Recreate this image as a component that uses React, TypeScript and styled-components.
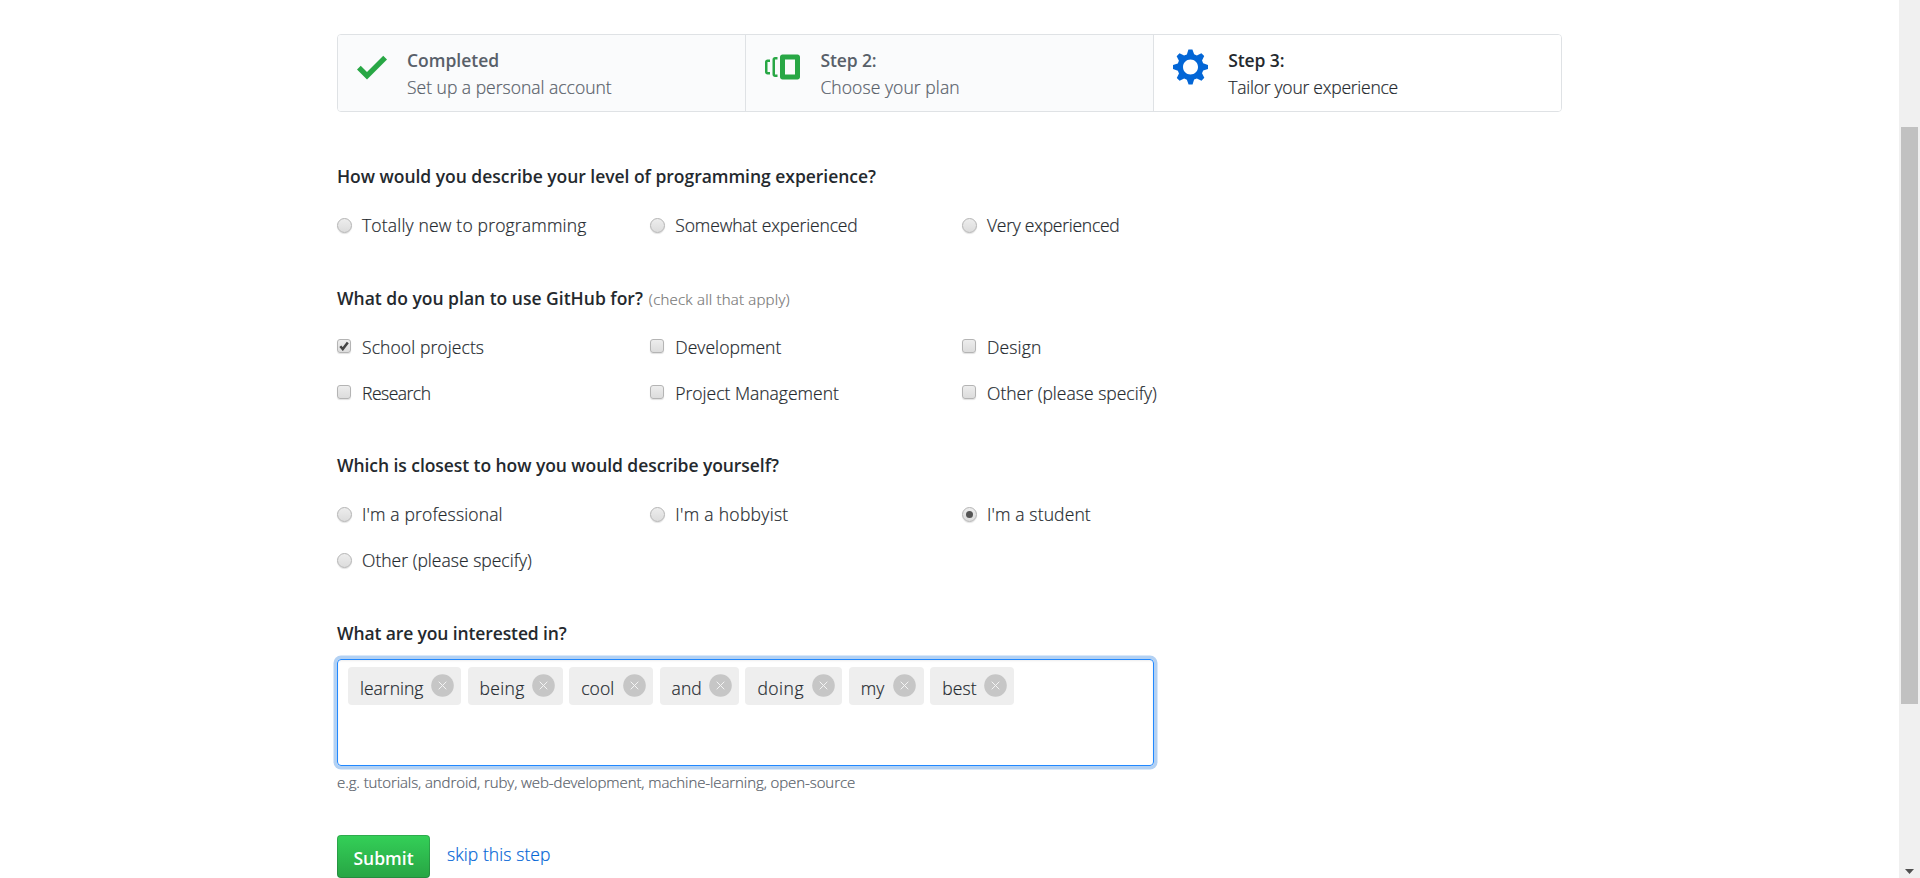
import React from "react";
import styled, { createGlobalStyle, css } from "styled-components";

const GlobalStyle = createGlobalStyle`
  *, *::before, *::after { box-sizing: border-box; }
  html, body { margin: 0; height: 878px; overflow: hidden; background: #fff; }
  body {
    color: #24292e;
    font: 300 17.5px/26px "Open Sans", "Noto Sans", sans-serif;
    -webkit-text-stroke-width: 0.2px;
  }
`;

const Window = styled.div`
  display: flex;
  width: 1920px;
  height: 878px;
  overflow: hidden;
`;

const Page = styled.main`
  flex: 1;
  display: flex;
  justify-content: center;
  padding-top: 34px;
`;

const Container = styled.div`
  width: 1225px;
`;

const Text = styled.span<{ $track?: number }>`
  white-space: nowrap;
  letter-spacing: ${(p) => p.$track ?? 0}px;
`;

const Steps = styled.ol`
  display: grid;
  grid-template-columns: 407.4px 407.9px 1fr;
  height: 78px;
  margin: 0 0 51px;
  padding: 0;
  list-style: none;
  border: 1px solid #dfe2e5;
  border-radius: 4px;
  overflow: hidden;
`;

const Step = styled.li<{ $current?: boolean }>`
  display: flex;
  gap: 20px;
  padding: 12px 19px;
  color: ${(p) => (p.$current ? "#24292e" : "#586069")};
  background: ${(p) => (p.$current ? "#fff" : "#fafbfc")};

  & + & {
    border-left: 1px solid #dfe2e5;
  }
`;

const StepIcon = styled.svg<{ $color: string }>`
  flex: none;
  height: 40px;
  fill: ${(p) => p.$color};
`;

const StepText = styled.div`
  display: flex;
  flex-direction: column;
`;

const StepTitle = styled(Text)`
  margin-bottom: 1px;
  font-weight: 600;
  -webkit-text-stroke-width: 0;
`;

const Group = styled.section`
  margin-bottom: 36.6px;
`;

const Question = styled.h4`
  margin: 0 0 13px;
  font-size: 17.5px;
  font-weight: 600;
  line-height: 26px;
  -webkit-text-stroke-width: 0;
`;

const Note = styled(Text)`
  margin-left: 6px;
  font-size: 15px;
  font-weight: 300;
  line-height: 1;
  color: #767676;
  -webkit-text-stroke-width: 0.2px;
`;

const Options = styled.div`
  display: grid;
  grid-template-columns: repeat(3, 312.5px);
  grid-auto-rows: 46px;
`;

const Option = styled.label`
  display: flex;
  align-items: center;

  &:nth-child(3n + 2) > :last-child {
    margin-left: 0.8px;
  }
`;

const control = css`
  flex: none;
  display: flex;
  align-items: center;
  justify-content: center;
  border: 1px solid #b4b4b4;
  background: linear-gradient(#ededed, #dcdcdc);
  box-shadow: 0 1px 1px rgba(0, 0, 0, 0.12);
`;

const Radio = styled.span<{ $checked?: boolean }>`
  ${control}
  width: 15px;
  height: 15px;
  margin-right: 10px;
  border-radius: 50%;

  &::after {
    content: "";
    width: 7px;
    height: 7px;
    border-radius: 50%;
    background: ${(p) => (p.$checked ? "#555" : "transparent")};
  }
`;

const Checkbox = styled.span`
  ${control}
  width: 14px;
  height: 14px;
  margin: -1px 11px 0 0;
  border-radius: 3px;
`;

const TagBox = styled.div`
  display: flex;
  align-items: flex-start;
  gap: 6.4px;
  width: 816.5px;
  height: 107px;
  padding: 7px 10px;
  border: 1px solid #2188ff;
  border-radius: 4px;
  box-shadow: inset 0 1px 2px rgba(27, 31, 35, 0.075), 0 0 0 3.5px rgba(3, 102, 214, 0.3);
`;

const Tag = styled.span<{ $width: number }>`
  display: flex;
  align-items: center;
  justify-content: space-between;
  width: ${(p) => p.$width}px;
  height: 38px;
  padding: 0 7.5px 0 12px;
  border-radius: 4px;
  background: #eee;
`;

const TagName = styled(Text)`
  padding-top: 4px;
`;

const Remove = styled.svg`
  flex: none;
  width: 23px;
  height: 23px;
`;

const Hint = styled.p`
  margin: 5px 0 0;
  font-size: 15px;
  line-height: 22px;
  color: #586069;
`;

const Actions = styled.div`
  display: flex;
  align-items: flex-start;
  gap: 17px;
  margin-top: 42px;
`;

const Submit = styled.button`
  width: 93px;
  height: 43px;
  padding: 3.5px 0 0;
  border: 1px solid rgba(27, 31, 35, 0.2);
  border-radius: 4px;
  background: #28a745 linear-gradient(-180deg, #34d058, #28a745 90%) -1px -1px / 110% 110%;
  color: #fff;
  font: 600 17.5px/26px "Open Sans", "Noto Sans", sans-serif;
  -webkit-text-stroke-width: 0;
`;

const SkipLink = styled.a`
  padding-top: 6.6px;
  color: #0366d6;
  text-decoration: none;
`;

const ScrollTrack = styled.div`
  display: flex;
  flex-direction: column;
  justify-content: space-between;
  align-items: center;
  width: 21px;
  padding: 127px 2px 4px;
  background: #f0f0f0;
`;

const ScrollThumb = styled.div`
  width: 17px;
  height: 577px;
  background: #c1c1c1;
`;

const ScrollArrow = styled.svg`
  width: 9px;
  height: 5px;
  fill: #505050;
`;

const icons = {
  check: { width: 12, d: "M12 5l-8 8-4-4 1.5-1.5L4 10l6.5-6.5L12 5z" },
  versions: {
    width: 14,
    d: "M13 3H7c-.55 0-1 .45-1 1v8c0 .55.45 1 1 1h6c.55 0 1-.45 1-1V4c0-.55-.45-1-1-1zm-1 8H8V5h4v6zM4 4h1v1H4v6h1v1H4c-.55 0-1-.45-1-1V5c0-.55.45-1 1-1zM1 5h1v1H1v4h1v1H1c-.55 0-1-.45-1-1V6c0-.55.45-1 1-1z",
  },
  gear: {
    width: 14,
    d: "M14 8.77v-1.6l-1.94-.64-.45-1.09.88-1.84-1.13-1.13-1.81.91-1.09-.45-.69-1.92h-1.6l-.63 1.94-1.11.45-1.84-.88-1.13 1.13.91 1.81-.45 1.09L0 7.23v1.59l1.94.64.45 1.09-.88 1.84 1.13 1.13 1.81-.91 1.09.45.69 1.92h1.59l.63-1.94 1.11-.45 1.84.88 1.13-1.13-.92-1.81.47-1.09L14 8.75v.02zM7 11c-1.66 0-3-1.34-3-3s1.34-3 3-3 3 1.34 3 3-1.34 3-3 3z",
  },
};

type Label = { text: string; track: number; checked?: boolean };

const steps: { icon: keyof typeof icons; color: string; title: Label; body: Label; current?: boolean }[] = [
  {
    icon: "check",
    color: "#28a745",
    title: { text: "Completed", track: 0 },
    body: { text: "Set up a personal account", track: 0 },
  },
  {
    icon: "versions",
    color: "#28a745",
    title: { text: "Step 2:", track: -0.1 },
    body: { text: "Choose your plan", track: 0.08 },
  },
  {
    icon: "gear",
    color: "#0366d6",
    title: { text: "Step 3:", track: -0.1 },
    body: { text: "Tailor your experience", track: -0.24 },
    current: true,
  },
];

const groups: { question: Label; note?: Label; multiple?: boolean; options: Label[] }[] = [
  {
    question: { text: "How would you describe your level of programming experience?", track: -0.03 },
    options: [
      { text: "Totally new to programming", track: 0.18 },
      { text: "Somewhat experienced", track: -0.13 },
      { text: "Very experienced", track: -0.25 },
    ],
  },
  {
    question: { text: "What do you plan to use GitHub for?", track: 0 },
    note: { text: "(check all that apply)", track: 0.22 },
    multiple: true,
    options: [
      { text: "School projects", track: 0.1, checked: true },
      { text: "Development", track: 0.05 },
      { text: "Design", track: 0.15 },
      { text: "Research", track: -0.5 },
      { text: "Project Management", track: 0 },
      { text: "Other (please specify)", track: 0.02 },
    ],
  },
  {
    question: { text: "Which is closest to how you would describe yourself?", track: -0.065 },
    options: [
      { text: "I'm a professional", track: 0.15 },
      { text: "I'm a hobbyist", track: 0.3 },
      { text: "I'm a student", track: 0.13, checked: true },
      { text: "Other (please specify)", track: 0.02 },
    ],
  },
];

const tags = [
  { text: "learning", width: 113.2, track: 0 },
  { text: "being", width: 95.2, track: 0.35 },
  { text: "cool", width: 84, track: 0.1 },
  { text: "and", width: 79.5, track: 0.1 },
  { text: "doing", width: 97, track: 0.5 },
  { text: "my", width: 75, track: 0 },
  { text: "best", width: 84, track: 0.1 },
];

export default function App() {
  return (
    <Window>
      <GlobalStyle />
      <Page>
        <Container>
          <Steps>
            {steps.map((s) => (
              <Step key={s.icon} $current={s.current}>
                <StepIcon $color={s.color} viewBox={`0 0 ${icons[s.icon].width} 16`} width={icons[s.icon].width * 2.5}>
                  <path fillRule="evenodd" d={icons[s.icon].d} />
                </StepIcon>
                <StepText>
                  <StepTitle $track={s.title.track}>{s.title.text}</StepTitle>
                  <Text $track={s.body.track}>{s.body.text}</Text>
                </StepText>
              </Step>
            ))}
          </Steps>

          {groups.map((g) => (
            <Group key={g.question.text}>
              <Question>
                <Text $track={g.question.track}>{g.question.text}</Text>
                {g.note && <Note $track={g.note.track}>{g.note.text}</Note>}
              </Question>
              <Options>
                {g.options.map((o) => (
                  <Option key={o.text}>
                    {g.multiple ? (
                      <Checkbox>
                        {o.checked && (
                          <svg width="10" height="10" viewBox="0 0 10 10">
                            <path d="M1.3 5.2l2.5 2.9L8.8 1.6" fill="none" stroke="#444" strokeWidth="2.5" />
                          </svg>
                        )}
                      </Checkbox>
                    ) : (
                      <Radio $checked={o.checked} />
                    )}
                    <Text $track={o.track}>{o.text}</Text>
                  </Option>
                ))}
              </Options>
            </Group>
          ))}

          <Question>
            <Text $track={-0.12}>What are you interested in?</Text>
          </Question>
          <TagBox>
            {tags.map((t) => (
              <Tag key={t.text} $width={t.width}>
                <TagName $track={t.track}>{t.text}</TagName>
                <Remove viewBox="0 0 23 23">
                  <circle cx="11.5" cy="11.5" r="11.3" fill="#c6c6c6" />
                  <path d="M7.7 7.7l7.6 7.6M15.3 7.7l-7.6 7.6" stroke="#f4f4f4" strokeWidth="1" />
                </Remove>
              </Tag>
            ))}
          </TagBox>
          <Hint>
            <Text $track={-0.09}>e.g. tutorials, android, ruby, web-development, machine-learning, open-source</Text>
          </Hint>
          <Actions>
            <Submit>Submit</Submit>
            <SkipLink>
              <Text $track={0.08}>skip this step</Text>
            </SkipLink>
          </Actions>
        </Container>
      </Page>
      <ScrollTrack>
        <ScrollThumb />
        <ScrollArrow viewBox="0 0 9 5">
          <path d="M0 0h9L4.5 5z" />
        </ScrollArrow>
      </ScrollTrack>
    </Window>
  );
}
